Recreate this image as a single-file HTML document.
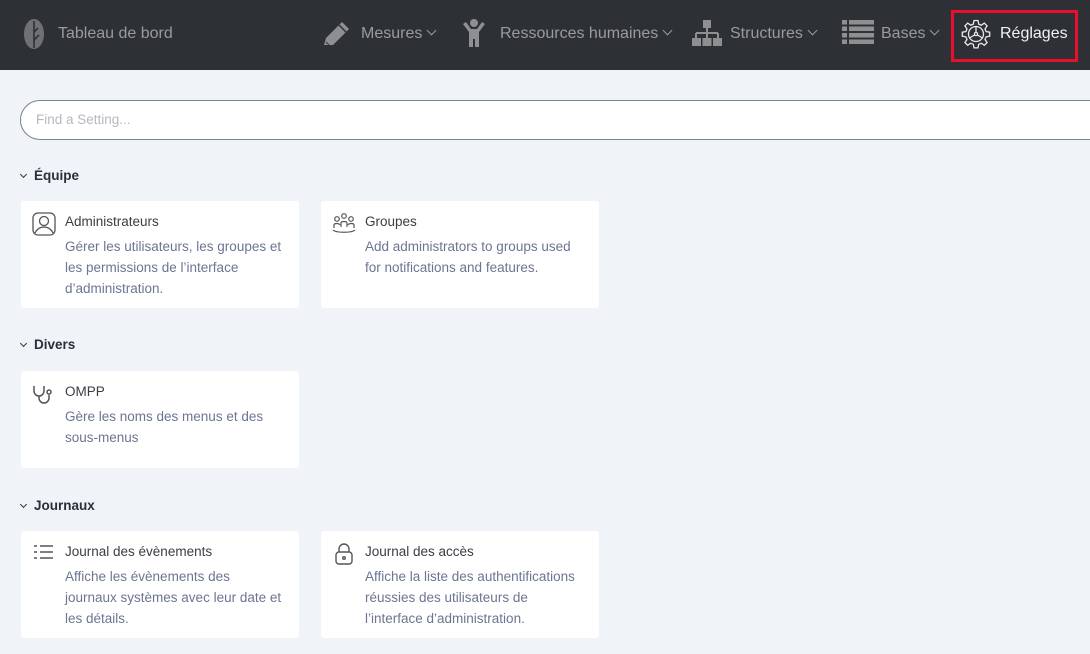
<!DOCTYPE html>
<html><head><meta charset="utf-8">
<style>
*{margin:0;padding:0;box-sizing:border-box}
body{width:1090px;height:654px;overflow:hidden;background:#f0f3f8;font-family:"Liberation Sans",sans-serif;position:relative}
.hdr{position:absolute;left:0;top:0;width:1090px;height:70px;background:#2d3034}
.nav{position:absolute;top:25px;font-size:16px;color:#9a9b9d;white-space:nowrap}
.chev{display:inline-block;width:7px;height:7px;border-right:1.3px solid #9a9b9d;border-bottom:1.3px solid #9a9b9d;transform:rotate(45deg);margin-left:6px;position:relative;top:-4px}
.hl{position:absolute;left:951px;top:10px;width:127px;height:52px;border:3px solid #e8102c}
.search{position:absolute;left:20px;top:100px;width:1100px;height:40px;border:1px solid #7a8196;border-radius:20px;background:#fff;font-size:13.5px;color:#b5b8c0;padding:11px 0 0 15px}
.sec{position:absolute;left:19px;font-size:13.5px;font-weight:bold;color:#2b2f36}
.sec .c{display:inline-block;width:5px;height:5px;border-right:1.2px solid #333;border-bottom:1.2px solid #333;transform:rotate(45deg);margin:0 8px 0 2px;position:relative;top:-3px}
.card{position:absolute;width:278px;background:#fff;border-radius:3px}
.card .t{position:absolute;left:44px;top:13px;font-size:13.5px;color:#3a3d44}
.card .d{position:absolute;left:44px;top:35px;width:234px;font-size:13.5px;line-height:21px;color:#6c7591;white-space:nowrap}
.card svg{position:absolute;left:11px;top:11px}
</style></head><body>
<div class="hdr">
<svg style="position:absolute;left:22px;top:18px" width="24" height="32" viewBox="0 0 24 32"><ellipse cx="12" cy="16" rx="10" ry="15" fill="#6f7073"/><path d="M12 3 L12 30 M12 14 L16 10 M12 22 L17 17" stroke="#2d3034" stroke-width="1.6" fill="none"/></svg>
<div class="nav" style="left:58px">Tableau de bord</div>
<svg style="position:absolute;left:321px;top:20px" width="30" height="28" viewBox="0 0 30 28"><path d="M3 25 L5 18 L21 2 L28 9 L12 25 Z" fill="#8e8f91"/><path d="M18 5 L25 12" stroke="#2d3034" stroke-width="1.5"/><path d="M5 22 L8 25" stroke="#2d3034" stroke-width="1"/></svg>
<div class="nav" style="left:361px">Mesures<span class="chev"></span></div>
<svg style="position:absolute;left:462px;top:18px" width="24" height="30" viewBox="0 0 24 30"><circle cx="12" cy="5" r="4" fill="#8e8f91"/><path d="M1 6 L4 4 L9 11 L15 11 L20 4 L23 6 L17 14 L17 29 L13 29 L13 21 L11 21 L11 29 L7 29 L7 14 Z" fill="#8e8f91"/></svg>
<div class="nav" style="left:500px">Ressources humaines<span class="chev"></span></div>
<svg style="position:absolute;left:691px;top:19px" width="32" height="28" viewBox="0 0 32 28"><rect x="12" y="1" width="8" height="8" fill="#8e8f91"/><path d="M16 9 V14 M5 14 H27 M5 14 V19 M16 14 V19 M27 14 V19" stroke="#8e8f91" stroke-width="2" fill="none"/><rect x="1" y="19" width="9" height="8" fill="#8e8f91"/><rect x="11.5" y="19" width="9" height="8" fill="#8e8f91"/><rect x="22" y="19" width="9" height="8" fill="#8e8f91"/></svg>
<div class="nav" style="left:730px">Structures<span class="chev"></span></div>
<svg style="position:absolute;left:842px;top:20px" width="32" height="25" viewBox="0 0 32 25"><g fill="#8e8f91"><rect x="0" y="0" width="5" height="4.5"/><rect x="7" y="0" width="25" height="4.5"/><rect x="0" y="6.5" width="5" height="4.5"/><rect x="7" y="6.5" width="25" height="4.5"/><rect x="0" y="13" width="5" height="4.5"/><rect x="7" y="13" width="25" height="4.5"/><rect x="0" y="19.5" width="5" height="4.5"/><rect x="7" y="19.5" width="25" height="4.5"/></g></svg>
<div class="nav" style="left:881px">Bases<span class="chev"></span></div>
<svg style="position:absolute;left:961px;top:19px" width="30" height="30" viewBox="0 0 30 30" fill="none" stroke="#e8e8e8" stroke-width="1.3"><path d="M13 1.5h4l.7 3.6 2.6 1.1 3-2.1 2.8 2.8-2.1 3 1.1 2.6 3.6.7v4l-3.6.7-1.1 2.6 2.1 3-2.8 2.8-3-2.1-2.6 1.1-.7 3.6h-4l-.7-3.6-2.6-1.1-3 2.1-2.8-2.8 2.1-3-1.1-2.6-3.6-.7v-4l3.6-.7 1.1-2.6-2.1-3 2.8-2.8 3 2.1 2.6-1.1z"/><circle cx="15" cy="15" r="7.5"/><circle cx="15" cy="15" r="1.6"/><path d="M15 7.5v6M8.5 19l5-3M21.5 19l-5-3"/></svg>
<div class="nav" style="left:1000px;color:#f2f2f2">Réglages</div>
<div class="hl"></div>
</div>
<div class="search">Find a Setting...</div>

<div class="sec" style="top:168px"><span class="c"></span>Équipe</div>
<div class="card" style="left:21px;top:201px;height:107px">
<svg width="24" height="24" viewBox="0 0 24 24" fill="none" stroke="#555" stroke-width="1.3"><rect x="1" y="1" width="22" height="22" rx="5"/><circle cx="12" cy="9" r="4.5"/><path d="M3 21c2-4 5-6 9-6s7 2 9 6"/></svg>
<div class="t">Administrateurs</div>
<div class="d">Gérer les utilisateurs, les groupes et<br>les permissions de l’interface<br>d’administration.</div></div>
<div class="card" style="left:321px;top:201px;height:107px">
<svg width="24" height="24" viewBox="0 0 24 24" fill="none" stroke="#555" stroke-width="1.2"><circle cx="12" cy="4" r="2.3"/><circle cx="5" cy="7" r="2.3"/><circle cx="19" cy="7" r="2.3"/><path d="M9 15v-4c0-2 6-2 6 0v4M2 16v-3c0-2 5-2 6 0M22 16v-3c0-2-5-2-6 0M1 18c3 3 19 3 22 0"/></svg>
<div class="t">Groupes</div>
<div class="d">Add administrators to groups used<br>for notifications and features.</div></div>

<div class="sec" style="top:337px"><span class="c"></span>Divers</div>
<div class="card" style="left:21px;top:371px;height:97px">
<svg width="24" height="24" viewBox="0 0 24 24" fill="none" stroke="#555" stroke-width="1.5"><path d="M2 4v5a5 5 0 0 0 10 0V4M7 14v2a5 5 0 0 0 10 0v-3"/><circle cx="17" cy="10" r="2"/></svg>
<div class="t">OMPP</div>
<div class="d">Gère les noms des menus et des<br>sous-menus</div></div>

<div class="sec" style="top:498px"><span class="c"></span>Journaux</div>
<div class="card" style="left:21px;top:531px;height:107px">
<svg width="24" height="24" viewBox="0 0 24 24" fill="none" stroke="#555" stroke-width="1.5"><path d="M2 4h3M2 10h3M2 16h3M8 4h13M8 10h13M8 16h13"/></svg>
<div class="t">Journal des évènements</div>
<div class="d">Affiche les évènements des<br>journaux systèmes avec leur date et<br>les détails.</div></div>
<div class="card" style="left:321px;top:531px;height:107px">
<svg width="24" height="24" viewBox="0 0 24 24" fill="none" stroke="#555" stroke-width="1.4"><path d="M7 10V7a5 5 0 0 1 10 0v3"/><rect x="4" y="10" width="16" height="12" rx="3"/><circle cx="12" cy="16" r="1.3"/></svg>
<div class="t">Journal des accès</div>
<div class="d">Affiche la liste des authentifications<br>réussies des utilisateurs de<br>l’interface d’administration.</div></div>
</body></html>
